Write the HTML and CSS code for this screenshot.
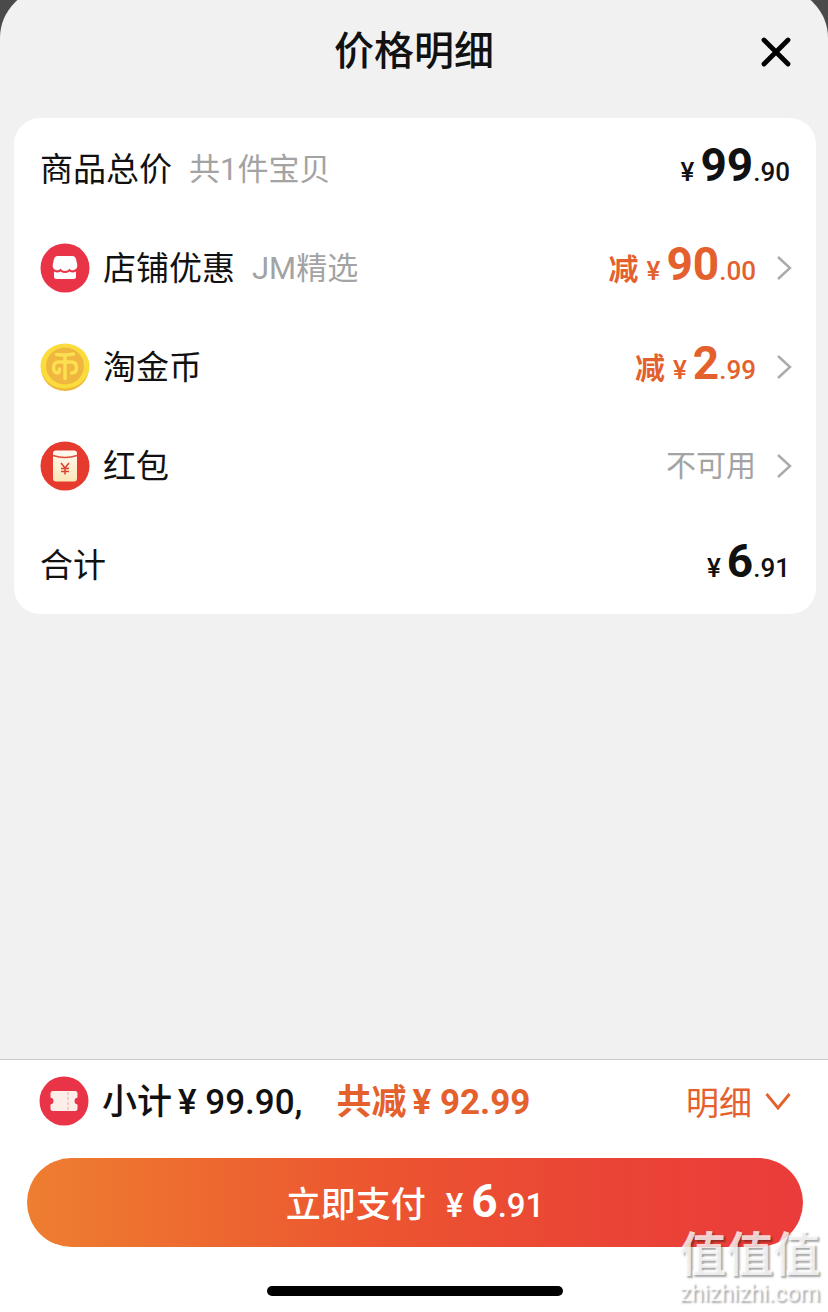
FILE: index.html
```html
<!DOCTYPE html>
<html lang="zh-CN">
<head>
    <meta charset="UTF-8">
    <meta name="viewport" content="width=device-width, initial-scale=1.0">
    <title>价格明细</title>
    <link rel="stylesheet" href="styles.css">
</head>
<body>

    <div class="sheet">
        <!-- Header -->
        <header class="header">
            <h1>价格明细</h1>
            <button type="button" class="close" aria-label="关闭">
                <svg width="32" height="32" viewBox="0 0 32 32">
                    <path d="M4 4L28 28M28 4L4 28" fill="none" stroke="#000" stroke-width="4.8" stroke-linecap="round"/>
                </svg>
            </button>
        </header>

        <!-- Price list -->
        <main class="content">
            <ul class="card">
                <li class="row">
                    <span class="label">商品总价</span>
                    <span class="note">共1件宝贝</span>
                    <span class="price"><span class="yen">¥</span><b>99</b><span class="cents">.90</span></span>
                </li>
                <li class="row">
                    <svg class="icon" viewBox="0 0 50 50">
                        <circle cx="25" cy="25" r="24.5" fill="#e83446"/>
                        <path d="M17.5 13H32.500Q35 13 36 16L37.300 22Q37.500 26 34 27Q31 28 29.500 25.800Q28 28 25 28Q22 28 20.500 25.800Q18.500 28 15.500 27Q12.500 26 12.700 22L14 16Q15 13 17.500 13Z" fill="#fff"/>
                        <path d="M14 28.500Q17.500 30.500 20.500 28.500Q25 31.500 29.500 28.500Q32.500 30.500 36 28.500V33.500Q36 36 33.500 36H16.500Q14 36 14 33.500Z" fill="#fff"/>
                    </svg>
                    <span class="label">店铺优惠</span>
                    <span class="note">JM精选</span>
                    <button type="button" class="price discount">
                        <span class="minus">减</span><span class="yen">¥</span><b>90</b><span class="cents">.00</span>
                        <svg class="arrow" width="16" height="26" viewBox="0 0 16 26">
                            <path d="M2 2L14 13L2 24" fill="none" stroke="#aaa" stroke-width="2.400"/>
                        </svg>
                    </button>
                </li>
                <li class="row">
                    <svg class="icon" viewBox="0 0 50 50">
                        <ellipse cx="25" cy="26" rx="24" ry="23" fill="#edb93c"/>
                        <ellipse cx="25" cy="24" rx="24.5" ry="22.500" fill="#fbdc3d"/>
                        <ellipse cx="25" cy="24" rx="19" ry="18.500" fill="#efb640"/>
                        <path d="M16.500 12.500Q25 13.500 33.500 12M25 13.500V36.500M18 31Q13.500 31 13.500 25.500Q13.500 20 19 20H31Q36.500 20 36.500 25.500Q36.500 31 31.500 31M18 31Q19.500 30.500 19.500 27" fill="none" stroke="#fce050" stroke-width="3.500" stroke-linecap="round" stroke-linejoin="round"/>
                    </svg>
                    <span class="label">淘金币</span>
                    <button type="button" class="price discount">
                        <span class="minus">减</span><span class="yen">¥</span><b>2</b><span class="cents">.99</span>
                        <svg class="arrow" width="16" height="26" viewBox="0 0 16 26">
                            <path d="M2 2L14 13L2 24" fill="none" stroke="#aaa" stroke-width="2.400"/>
                        </svg>
                    </button>
                </li>
                <li class="row">
                    <svg class="icon" viewBox="0 0 50 50">
                        <defs>
                            <linearGradient id="packet" x1="0" y1="0" x2="0" y2="1">
                                <stop offset="0" stop-color="#fffaf0"/>
                                <stop offset="1" stop-color="#fbe6b8"/>
                            </linearGradient>
                        </defs>
                        <circle cx="25" cy="25" r="24.5" fill="#e63a2e"/>
                        <rect x="13" y="9.500" width="24" height="31" rx="3" fill="url(#packet)"/>
                        <path d="M13 14.500Q25 18.500 37 14.500" fill="none" stroke="#e0493a" stroke-width="1.600"/>
                        <path d="M21 22L25 27L29 22M25 27V33.500M21 27.500H29M21 30.500H29" fill="none" stroke="#dc4133" stroke-width="1.500"/>
                    </svg>
                    <span class="label">红包</span>
                    <button type="button" class="price disabled">
                        不可用
                        <svg class="arrow" width="16" height="26" viewBox="0 0 16 26">
                            <path d="M2 2L14 13L2 24" fill="none" stroke="#aaa" stroke-width="2.400"/>
                        </svg>
                    </button>
                </li>
                <li class="row">
                    <span class="label">合计</span>
                    <span class="price"><span class="yen">¥</span><b>6</b><span class="cents">.91</span></span>
                </li>
            </ul>
        </main>

        <!-- Footer -->
        <footer class="footer">
            <div class="summary">
                <svg class="icon" viewBox="0 0 50 50">
                    <circle cx="25" cy="25" r="24.5" fill="#e83446"/>
                    <path d="M14 15H36Q38.500 15 38.500 17.500V21.500Q35.500 22 35.500 25Q35.500 28 38.500 28.500V32.500Q38.500 35 36 35H14Q11.500 35 11.500 32.500V28.500Q14.500 28 14.500 25Q14.500 22 11.500 21.500V17.500Q11.500 15 14 15Z" fill="#fdeee9"/>
                    <path d="M29 16V34" stroke="#f4c3bd" stroke-width="1.600" stroke-dasharray="3 2"/>
                </svg>
                <span class="subtotal">小计<span class="amount">¥ 99.90</span>,</span>
                <span class="saved">共减<span class="amount">¥ 92.99</span></span>
                <button type="button" class="toggle">
                    明细
                    <svg width="26" height="20" viewBox="0 0 26 20">
                        <path d="M1.500 3L13 17L24.500 3" fill="none" stroke="#e4602d" stroke-width="2.800"/>
                    </svg>
                </button>
            </div>
            <button type="button" class="pay">立即支付<span class="pay-yen">¥</span><b>6</b><span class="pay-cents">.91</span></button>
            <div class="home-bar"></div>
        </footer>

        <div class="watermark">
            <span class="mark-name">值值值</span>
            <span class="mark-url">zhizhizhi.com</span>
        </div>
    </div>

</body>
</html>
```

FILE: styles.css
```css
* {
    box-sizing: border-box;
}
body {
    margin: 0;
    min-height: 100vh;
    display: flex;
    flex-direction: column;
    background-color: #4a4a4a;
    color: #111;
    font-family: Roboto, "Noto Sans CJK SC", sans-serif;
}
h1, ul {
    margin: 0;
    padding: 0;
}
button {
    padding: 0;
    border: none;
    background: none;
    color: inherit;
    font-family: inherit;
    cursor: pointer;
}
svg {
    display: block;
    flex-shrink: 0;
}
.sheet {
    position: relative;
    flex: 1;
    display: flex;
    flex-direction: column;
    margin-top: -12px;
    border-radius: 50px 50px 0 0;
    background-color: #f1f1f1;
    overflow: hidden;
}

/* Header */
.header {
    display: grid;
    grid-template-columns: 1fr auto 1fr;
    align-items: center;
    height: 130px;
    padding: 12px 36px 14px;
}
.header h1 {
    grid-column: 2;
    font-size: 40px;
    font-weight: 500;
    line-height: 56px;
}
.close {
    justify-self: end;
}

/* Price list */
.content {
    flex: 1;
    padding: 0 12px 0 14px;
}
.card {
    padding: 1px 26px 0;
    border-radius: 26px;
    background-color: #fff;
    list-style: none;
}
.row {
    display: flex;
    align-items: center;
    height: 99px;
}
.icon {
    width: 50px;
    height: 50px;
    margin-right: 13px;
}
.label,
.note {
    padding-bottom: 4px;
}
.label {
    font-size: 33px;
}
.note {
    margin-left: 17px;
    color: #a3a3a3;
    font-size: 31px;
}
.price {
    display: flex;
    align-items: baseline;
    margin-left: auto;
    font-size: 30px;
    font-weight: 500;
    line-height: 60px;
}
.price b {
    font-size: 46px;
    font-weight: 700;
}
.yen {
    margin-right: 6px;
    font-size: 26px;
}
.cents {
    font-size: 26px;
}
.discount {
    color: #e4602d;
}
.minus {
    margin-right: 8px;
    font-weight: 700;
}
.disabled {
    color: #a3a3a3;
    font-weight: 400;
}
.arrow {
    align-self: center;
    margin-left: 20px;
}
.discount .arrow,
.disabled .arrow {
    margin-right: -2px;
}

/* Footer */
.footer {
    padding: 0 25px 16px 27px;
    border-top: 1px solid #ccc;
    background-color: #fff;
}
.summary {
    display: flex;
    align-items: center;
    height: 82px;
    margin-bottom: 16px;
    padding: 0 12px;
    font-size: 35px;
    font-weight: 500;
}
.subtotal,
.saved {
    padding-bottom: 5px;
}
.amount {
    margin-left: 6px;
}
.saved {
    margin-left: 34px;
    color: #e4602d;
    font-weight: 700;
}
.toggle {
    display: flex;
    align-items: center;
    gap: 13px;
    margin-left: auto;
    color: #e4602d;
    font-size: 33px;
}
.pay {
    display: flex;
    justify-content: center;
    align-items: baseline;
    width: 100%;
    height: 89px;
    border-radius: 45px;
    background: linear-gradient(90deg, #ee7e30, #ec5530 45%, #ea4436 75%, #ea3c3a);
    color: #fff;
    font-size: 35px;
    font-weight: 500;
    line-height: 86px;
}
.pay b {
    margin-left: 8px;
    font-size: 46px;
}
.pay-yen {
    margin-left: 20px;
    font-size: 33px;
}
.pay-cents {
    font-size: 33px;
}
.home-bar {
    width: 296px;
    height: 10px;
    margin: 39px auto 0;
    border-radius: 5px;
    background-color: #000;
}

/* Watermark */
.watermark {
    position: absolute;
    right: 8px;
    bottom: 6px;
    display: flex;
    flex-direction: column;
    align-items: center;
    color: rgba(255, 255, 255, 0.8);
    text-shadow: 2px 2px 2px rgba(0, 0, 0, 0.35);
    pointer-events: none;
}
.mark-name {
    font-size: 47px;
    font-weight: 700;
    line-height: 54px;
}
.mark-url {
    font-size: 23px;
    line-height: 24px;
}
```
